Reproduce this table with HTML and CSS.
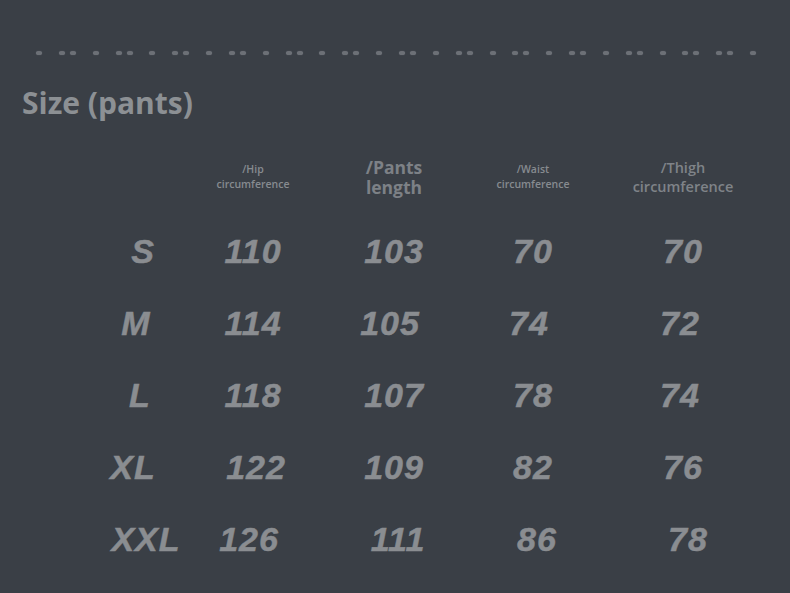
FILE: index.html
```html
<!DOCTYPE html>
<html>
<head>
<meta charset="utf-8">
<link rel="stylesheet" href="styles.css">
</head>
<body>
<div class="page">
  <div class="dots">
    <span class="grp"><i></i></span><span class="grp"><i></i><i></i></span>
    <span class="grp"><i></i></span><span class="grp"><i></i><i></i></span>
    <span class="grp"><i></i></span><span class="grp"><i></i><i></i></span>
    <span class="grp"><i></i></span><span class="grp"><i></i><i></i></span>
    <span class="grp"><i></i></span><span class="grp"><i></i><i></i></span>
    <span class="grp"><i></i></span><span class="grp"><i></i><i></i></span>
    <span class="grp"><i></i></span><span class="grp"><i></i><i></i></span>
    <span class="grp"><i></i></span><span class="grp"><i></i><i></i></span>
    <span class="grp"><i></i></span><span class="grp"><i></i><i></i></span>
    <span class="grp"><i></i></span><span class="grp"><i></i><i></i></span>
    <span class="grp"><i></i></span><span class="grp"><i></i><i></i></span>
    <span class="grp"><i></i></span><span class="grp"><i></i><i></i></span>
    <span class="grp"><i></i><i></i></span><span class="grp"><i></i></span>
  </div>
  <h1 class="title">Size (pants)</h1>
  <div class="table">
    <div class="hcell"></div>
    <div class="hcell small"><span>/Hip</span><span>circumference</span></div>
    <div class="hcell large"><span>/Pants</span><span>length</span></div>
    <div class="hcell small"><span>/Waist</span><span>circumference</span></div>
    <div class="hcell medium"><span>/Thigh</span><span>circumference</span></div>

    <div class="cell"><span class="r3">S</span></div><div class="cell">110</div><div class="cell">103</div><div class="cell">70</div><div class="cell">70</div>
    <div class="cell"><span class="l4">M</span></div><div class="cell">114</div><div class="cell"><span class="l4">105</span></div><div class="cell"><span class="l4">74</span></div><div class="cell"><span class="l3">72</span></div>
    <div class="cell">L</div><div class="cell">118</div><div class="cell">107</div><div class="cell">78</div><div class="cell"><span class="l3">74</span></div>
    <div class="cell"><span class="l7">XL</span></div><div class="cell"><span class="r3">122</span></div><div class="cell">109</div><div class="cell">82</div><div class="cell">76</div>
    <div class="cell"><span class="r6">XXL</span></div><div class="cell"><span class="l4">126</span></div><div class="cell"><span class="r4">111</span></div><div class="cell"><span class="r4">86</span></div><div class="cell"><span class="r5">78</span></div>
  </div>
</div>
</body>
</html>
```
FILE: styles.css
```css
html, body {
  margin: 0;
  padding: 0;
}
body {
  background: #3a3f46;
  width: 790px;
  height: 593px;
  overflow: hidden;
}
.page {
  padding-top: 50px;
}
.dots {
  display: flex;
  gap: 16.85px;
  padding-left: 36px;
  height: 5px;
  align-items: center;
}
.grp {
  display: flex;
  gap: 5px;
}
.grp i {
  display: block;
  width: 6px;
  height: 4px;
  border-radius: 50%;
  background: #6c7076;
  box-shadow: 0 0 1px #6c7076;
}
.title {
  margin: 30px 0 0 22px;
  font-family: "Open Sans", "Noto Sans", sans-serif;
  font-weight: 700;
  font-size: 30px;
  line-height: 36px;
  color: #8c9094;
}
.table {
  display: grid;
  grid-template-columns: 100px 126px 156px 122px 178px;
  grid-template-rows: 73px repeat(5, 72px);
  margin: 21px 0 0 90px;
}
.hcell {
  display: flex;
  flex-direction: column;
  align-items: center;
  justify-content: center;
  font-family: "Open Sans", "Noto Sans", sans-serif;
  font-weight: 600;
  color: #878b90;
  padding-bottom: 4px;
}
.hcell.small {
  font-size: 10.5px;
  line-height: 15px;
}
.hcell.large {
  font-size: 17.5px;
  line-height: 20px;
  font-weight: 700;
  color: #7d8186;
}
.hcell.medium {
  font-size: 14.5px;
  line-height: 19px;
  color: #7f8388;
}
.cell {
  display: flex;
  align-items: center;
  justify-content: center;
  font-family: "Liberation Sans", Arial, sans-serif;
  font-weight: 700;
  font-style: italic;
  font-size: 34px;
  letter-spacing: 1px;
  color: #8a8d91;
  -webkit-text-stroke: 0.5px #8a8d91;
}
.l3 { transform: translateX(-3px); }
.l4 { transform: translateX(-4px); }
.l7 { transform: translateX(-7px); }
.r3 { transform: translateX(3px); }
.r4 { transform: translateX(4px); }
.r5 { transform: translateX(5px); }
.r6 { transform: translateX(6px); }
```
